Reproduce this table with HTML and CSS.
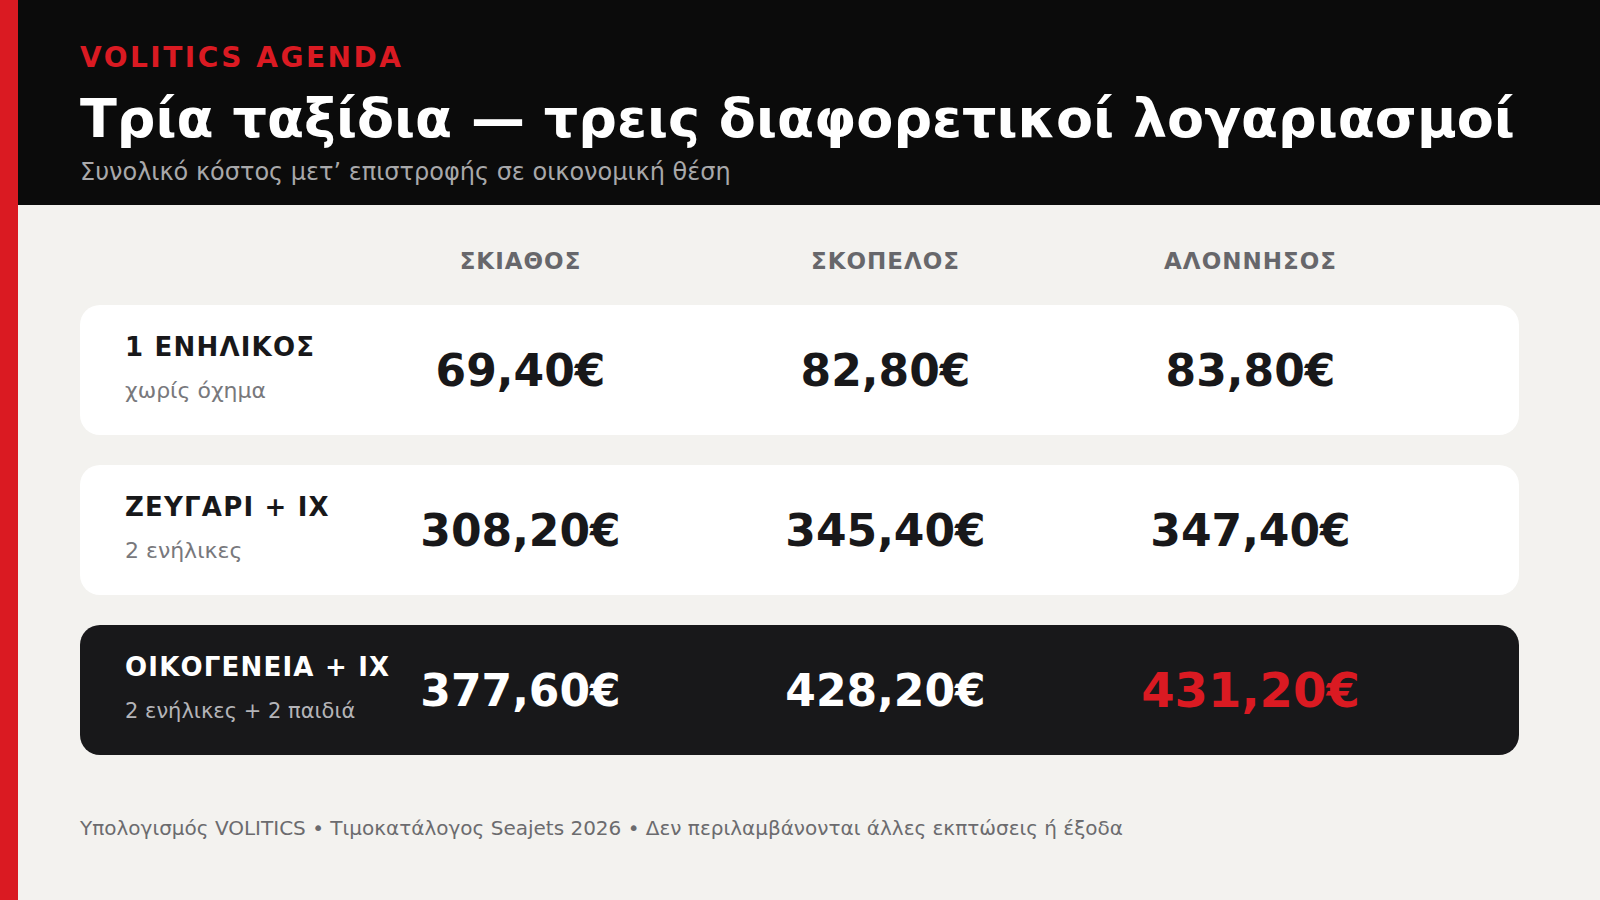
FILE: index.html
```html
<!DOCTYPE html>
<html lang="el">
<head>
<meta charset="utf-8">
<title>Volitics Agenda</title>
<link rel="stylesheet" href="styles.css">
</head>
<body>
<div class="page">
  <div class="accent"></div>
  <main class="main">
    <header class="hero">
      <div class="kicker">VOLITICS AGENDA</div>
      <h1 class="title">Τρία ταξίδια — τρεις διαφορετικοί λογαριασμοί</h1>
      <p class="subtitle">Συνολικό κόστος μετ’ επιστροφής σε οικονομική θέση</p>
    </header>
    <section class="content">
      <div class="grid head-row">
        <div></div>
        <div class="col-head">ΣΚΙΑΘΟΣ</div>
        <div class="col-head">ΣΚΟΠΕΛΟΣ</div>
        <div class="col-head">ΑΛΟΝΝΗΣΟΣ</div>
      </div>
      <div class="grid card">
        <div class="label"><div class="label-title">1 ΕΝΗΛΙΚΟΣ</div><div class="label-sub">χωρίς όχημα</div></div>
        <div class="price">69,40€</div>
        <div class="price">82,80€</div>
        <div class="price">83,80€</div>
      </div>
      <div class="grid card">
        <div class="label"><div class="label-title">ΖΕΥΓΑΡΙ + ΙΧ</div><div class="label-sub">2 ενήλικες</div></div>
        <div class="price">308,20€</div>
        <div class="price">345,40€</div>
        <div class="price">347,40€</div>
      </div>
      <div class="grid card card-dark">
        <div class="label"><div class="label-title">ΟΙΚΟΓΕΝΕΙΑ + ΙΧ</div><div class="label-sub">2 ενήλικες + 2 παιδιά</div></div>
        <div class="price">377,60€</div>
        <div class="price">428,20€</div>
        <div class="price price-max">431,20€</div>
      </div>
      <p class="footnote">Υπολογισμός VOLITICS • Τιμοκατάλογος Seajets 2026 • Δεν περιλαμβάνονται άλλες εκπτώσεις ή έξοδα</p>
    </section>
  </main>
</div>
</body>
</html>
```

FILE: styles.css
```css
* { box-sizing: border-box; }
html, body { margin: 0; padding: 0; }
body {
  width: 1600px;
  height: 900px;
  overflow: hidden;
  font-family: "DejaVu Sans", "Noto Sans", sans-serif;
  background: #f3f2ef;
}
.page {
  display: flex;
  height: 900px;
}
.accent {
  width: 18px;
  flex: 0 0 18px;
  background: #da1a22;
}
.main {
  flex: 1;
  display: flex;
  flex-direction: column;
}
.hero {
  background: #0b0b0b;
  height: 205px;
  padding: 41px 0 0 62px;
}
.kicker {
  color: #da1a22;
  font-weight: bold;
  font-size: 28px;
  letter-spacing: 2.5px;
  line-height: 34px;
}
.title {
  margin: 13px 0 0 0;
  color: #ffffff;
  font-weight: bold;
  font-size: 54px;
  line-height: 62px;
}
.subtitle {
  margin: 7px 0 0 0;
  color: #a8a8aa;
  font-size: 24px;
  line-height: 30px;
}
.content {
  padding: 0 81px 0 62px;
  display: flex;
  flex-direction: column;
}
.grid {
  display: grid;
  grid-template-columns: 213px repeat(3, 1fr);
  align-items: center;
  padding: 0 86px 0 45px;
}
.head-row {
  height: 100px;
  padding-top: 12px;
}
.col-head {
  text-align: center;
  color: #67676b;
  font-weight: bold;
  font-size: 23px;
  letter-spacing: 1px;
}
.card {
  height: 130px;
  background: #ffffff;
  border-radius: 20px;
  margin-bottom: 30px;
}
.card-dark {
  background: #18181a;
}
.label {
  padding-bottom: 6px;
}
.label-title {
  font-weight: bold;
  font-size: 26px;
  letter-spacing: 1.2px;
  line-height: 32px;
  color: #18181a;
  white-space: nowrap;
}
.label-sub {
  margin-top: 15px;
  font-size: 22px;
  line-height: 26px;
  color: #78787c;
  white-space: nowrap;
}
.card-dark .label-title { color: #ffffff; }
.card-dark .label-sub { color: #b4b4b8; font-size: 21px; }
.price {
  text-align: center;
  font-weight: bold;
  font-size: 44px;
  color: #18181a;
}
.card-dark .price { color: #ffffff; }
.card-dark .price-max {
  color: #da1a22;
  font-size: 48px;
}
.footnote {
  margin: 31px 0 0 0;
  color: #6b6b6e;
  font-size: 20px;
  line-height: 24px;
}
```
